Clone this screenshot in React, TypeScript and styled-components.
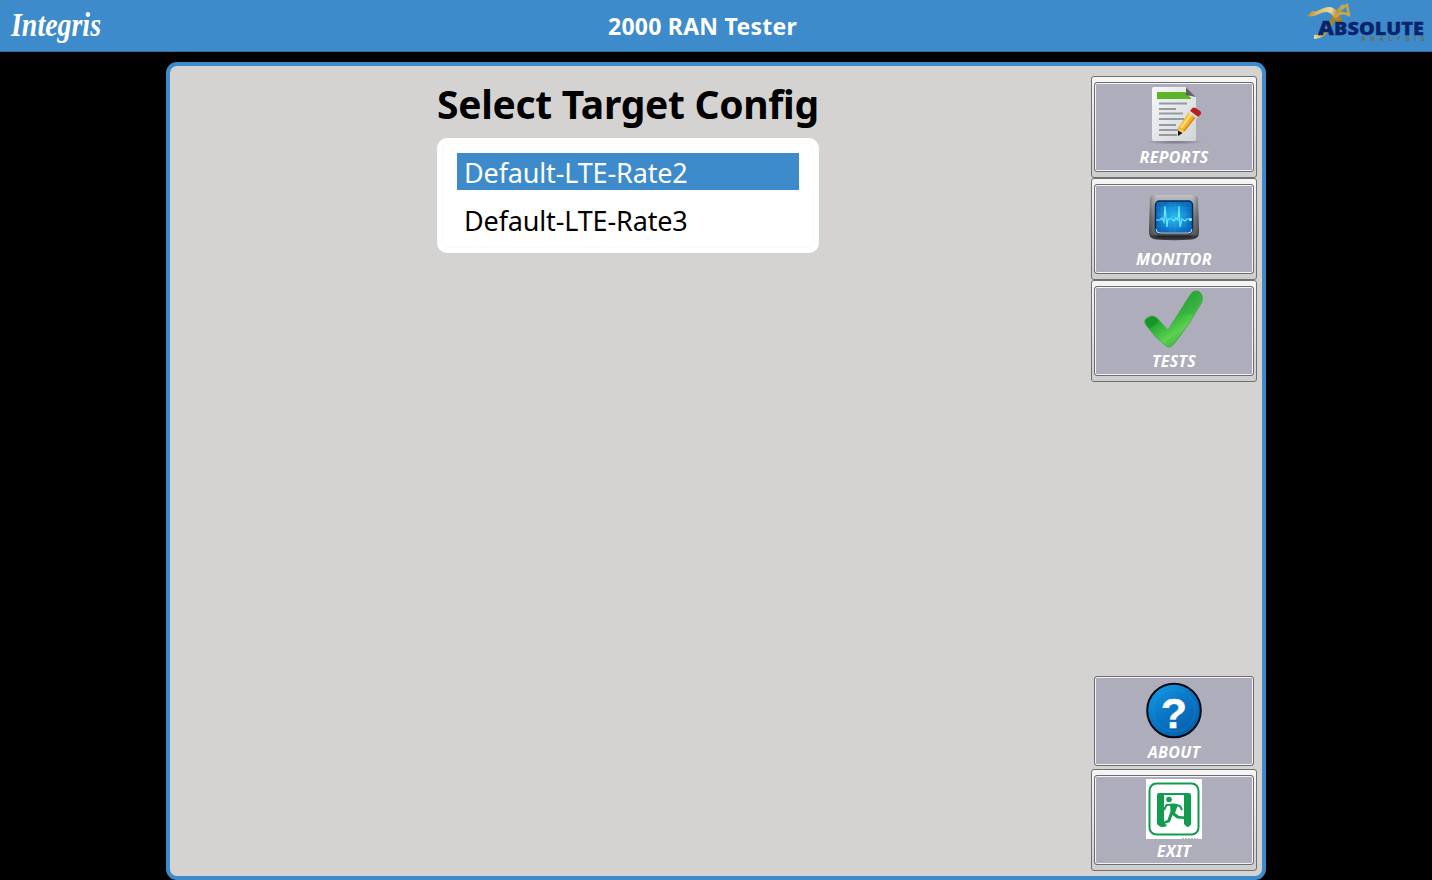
import React from 'react';
import styled, { createGlobalStyle } from 'styled-components';

const Global = createGlobalStyle`
  * { box-sizing: border-box; }
  html, body { margin: 0; height: 100%; background: #000; overflow: hidden; }
  body { font-family: "Noto Sans", "Open Sans", sans-serif; }
`;

const Screen = styled.div`
  width: 1432px;
  height: 880px;
  display: flex;
  flex-direction: column;
  background: #000;
`;

const Header = styled.header`
  height: 52px;
  flex: none;
  display: grid;
  grid-template-columns: 1fr auto 1fr;
  background: #3d8bcb;
  border-bottom: 1px solid #306d9f;
`;

const Title = styled.h1`
  margin: 0;
  padding: 1px 27px 0 0;
  font-size: 23px;
  line-height: 51px;
  font-weight: 700;
  letter-spacing: 0.25px;
  color: #fff;
`;

const BrandLeft = styled.div`
  padding-left: 8px;
  svg { display: block; overflow: visible; }
`;

const BrandRight = styled.div`
  display: flex;
  justify-content: flex-end;
  padding-right: 4px;
`;

const Panel = styled.main`
  width: 1100px;
  height: 818px;
  margin: 10px auto 0;
  border: 4px solid #3d8bcb;
  border-radius: 11px;
  background: #d4d3d1;
  display: flex;
  justify-content: space-between;
`;

const Content = styled.section`
  width: 382px;
  margin-left: 267px;
  padding-top: 11px;
`;

const Heading = styled.h2`
  margin: 0;
  height: 61px;
  line-height: 54px;
  font-size: 39px;
  font-weight: 700;
  letter-spacing: -0.3px;
  white-space: nowrap;
  color: #000;
`;

const ConfigList = styled.ul`
  list-style: none;
  margin: 0;
  height: 115px;
  padding: 10px 15px;
  border: 5px solid #fff;
  border-radius: 10px;
  background: #fff;
  box-shadow: inset 0 0 0 1px #fafafa;
  display: flex;
  flex-direction: column;
  gap: 11px;
`;

const ConfigItem = styled.li<{ $selected?: boolean }>`
  height: 37px;
  flex: none;
  padding: 1px 7px 0;
  line-height: 37px;
  font-size: 27px;
  letter-spacing: -0.15px;
  white-space: nowrap;
  color: ${(p) => (p.$selected ? '#fff' : '#000')};
  background: ${(p) => (p.$selected ? '#3d8bcb' : 'transparent')};
`;

const Sidebar = styled.nav`
  width: 166px;
  margin: 10px 5px 5px 0;
  display: flex;
  flex-direction: column;
`;

const Spacer = styled.div`
  flex: 1;
`;

const Frame = styled.div<{ $bare?: boolean }>`
  height: ${(p) => (p.$bare ? '90px' : '102px')};
  margin-bottom: ${(p) => (p.$bare ? '3px' : '0')};
  padding: ${(p) => (p.$bare ? '0 3px' : '5px 2px')};
  border: ${(p) => (p.$bare ? '0' : '1px solid #707070')};
  border-radius: 3px;
  background: ${(p) => (p.$bare ? 'none' : 'linear-gradient(#f5f5f5, #e6e6e6 45%, #cdcdcd)')};
`;

const Button = styled.button`
  width: 160px;
  height: 90px;
  display: flex;
  flex-direction: column;
  align-items: center;
  padding: 3px 0 0;
  border: 1px solid #6b6b70;
  border-radius: 3px;
  background: #adadbb;
  box-shadow: inset 0 0 0 1px #f4f4f6;
  font-family: inherit;
  svg { display: block; flex: none; }
`;

const Label = styled.span<{ $low?: boolean }>`
  height: 20px;
  line-height: 20px;
  margin-top: ${(p) => (p.$low ? '2px' : '1px')};
  font-size: 16px;
  font-weight: 700;
  font-style: italic;
  letter-spacing: 0.3px;
  color: #fff;
`;

const IntegrisLogo = () => (
  <svg width="104" height="51" viewBox="0 0 104 51">
    <text
      x="3" y="36" textLength="90" lengthAdjust="spacingAndGlyphs"
      fontFamily="'Liberation Serif', serif" fontStyle="italic" fontWeight="700" fontSize="33" fill="#fff"
    >Integris</text>
  </svg>
);

const AbsoluteLogo = () => (
  <svg width="124" height="50" viewBox="0 0 124 50">
    <defs>
      <linearGradient id="goldBand" gradientUnits="userSpaceOnUse" x1="3" y1="12" x2="38" y2="24">
        <stop offset="0" stopColor="#ad822c" />
        <stop offset="0.3" stopColor="#dcc070" />
        <stop offset="0.6" stopColor="#ead9a0" />
        <stop offset="0.8" stopColor="#b78a27" />
        <stop offset="1" stopColor="#a57a20" />
      </linearGradient>
      <linearGradient id="goldTail" gradientUnits="userSpaceOnUse" x1="44" y1="5" x2="12" y2="39">
        <stop offset="0" stopColor="#d9bd68" />
        <stop offset="0.4" stopColor="#a87c1e" />
        <stop offset="0.8" stopColor="#c09a3c" />
        <stop offset="1" stopColor="#f0dfa8" />
      </linearGradient>
    </defs>
    <path d="M40 6 C31 12 29 20 25 27 C21 34 17 37 10 37" fill="none" stroke="url(#goldTail)" strokeWidth="4" />
    <path d="M3 16 L8 11 C14 13 17 7 25 7 C32 7 34 14 39 21 L34 24 C30 18 28 12 22 12 C15 12 12 18 3 16Z" fill="url(#goldBand)" />
    <path d="M39 7 L43 5 C43 9 45 12 45 15 C40 12 35 13 31 17" fill="none" stroke="#c7a548" strokeWidth="2.600" />
    <text
      x="14" y="35" textLength="106" lengthAdjust="spacingAndGlyphs"
      fontFamily="'Open Sans', sans-serif" fontWeight="800" fontSize="18" fill="#0a246c" stroke="#0a246c" strokeWidth="0.3"
    ><tspan fontSize="20">A</tspan>BSOLUTE</text>
    <text
      x="57" y="41" textLength="64" lengthAdjust="spacing"
      fontFamily="'Liberation Sans', sans-serif" fontWeight="700" fontSize="6.500" fill="#6d6e48"
    >ANALYSIS</text>
  </svg>
);

const ReportsIcon = () => (
  <svg width="60" height="60" viewBox="0 0 60 60">
    <defs>
      <linearGradient id="paper" x1="0" y1="0" x2="1" y2="1">
        <stop offset="0" stopColor="#f7f8f8" /><stop offset="1" stopColor="#d2d5d7" />
      </linearGradient>
      <linearGradient id="fold" x1="0" y1="1" x2="1" y2="0">
        <stop offset="0" stopColor="#45454a" /><stop offset="1" stopColor="#97979c" />
      </linearGradient>
      <radialGradient id="shade"><stop offset="0" stopColor="#777783" /><stop offset="1" stopColor="#adadbb" /></radialGradient>
    </defs>
    <ellipse cx="31" cy="56" rx="29" ry="2.5" fill="url(#shade)" />
    <path d="M10 1 H42 L52 11 V53 Q52 55 50 55 H10 Q8 55 8 53 V3 Q8 1 10 1Z" fill="url(#paper)" />
    <path d="M13 6 H41 L47 12 V13 H13Z" fill="#5bb527" />
    <path d="M42 1 L52 11 L42 9Z" fill="url(#fold)" />
    <path d="M15 17.5H43 M15 23H32 M15 27.5H39 M15 33H40 M15 39H32 M15 44H36 M15 49H33" stroke="#929ba3" strokeWidth="2" />
    <path d="M34 42 L45 26 L52 31 L41 45 L34 48Z" fill="#f6b42b" />
    <path d="M37 42 L47 28" stroke="#ffdb72" strokeWidth="2.5" />
    <path d="M40 45 L51 31" stroke="#d98a1d" strokeWidth="1.5" />
    <path d="M34 43 L41 46 L35 50Z" fill="#f2d09b" />
    <path d="M34 44.5 L38.5 47 L34 50Z" fill="#17130f" />
    <path d="M46 25 L48 22.5 Q49.5 21 51.5 22 L56 25 Q58 26.500 56.500 28.500 L54 31Z" fill="#b6201f" />
    <path d="M44.700 26.700 L46 25 L54 31 L52.700 32.500Z" fill="#e1dfdb" />
  </svg>
);

const MonitorIcon = () => (
  <svg width="60" height="60" viewBox="0 0 60 60">
    <defs>
      <linearGradient id="metal" x1="0" y1="0" x2="0" y2="1">
        <stop offset="0" stopColor="#c2c2c3" /><stop offset="0.5" stopColor="#77797b" /><stop offset="0.86" stopColor="#55575a" /><stop offset="0.92" stopColor="#202225" /><stop offset="1" stopColor="#45474a" />
      </linearGradient>
      <linearGradient id="metalSides">
        <stop offset="0" stopColor="#303236" stopOpacity=".5" /><stop offset=".18" stopColor="#aaa" stopOpacity="0" /><stop offset=".82" stopColor="#aaa" stopOpacity="0" /><stop offset="1" stopColor="#303236" stopOpacity=".5" />
      </linearGradient>
      <radialGradient id="scope">
        <stop offset="0" stopColor="#27bdf0" /><stop offset="0.6" stopColor="#1690dc" /><stop offset="1" stopColor="#0d6aba" />
      </radialGradient>
    </defs>
    <path d="M11 7 H49 Q54 7 54 11 L55 44 Q55 51 48 51.500 Q30 53 12 51.500 Q5 51 5 44 L6 11 Q6 7 11 7Z" fill="url(#metal)" />
    <path d="M11 7 H49 Q54 7 54 11 L55 44 Q55 51 48 51.500 Q30 53 12 51.500 Q5 51 5 44 L6 11 Q6 7 11 7Z" fill="url(#metalSides)" />
    <rect x="11.500" y="13" width="37" height="32" rx="4" fill="url(#scope)" stroke="#082b55" strokeWidth="1.500" />
    <path d="M12 41 Q12 45 16 45 H44 Q48 45 48 41" fill="none" stroke="#c3e7f3" strokeWidth="1" />
    <path d="M12 20H48 M12 26H48 M12 38H48 M18 14V44 M26 14V44 M31 14V44 M41 14V44" stroke="#3cb4e3" strokeOpacity=".3" strokeWidth=".7" />
    <path d="M12 32 H16 L18 30 L20 34 L21 18 L23 39 L24 31 H28 L30 33 L32 30 L34 32 L35 18 L36 39 L38 31 L41 33 L43 31 H47" fill="none" stroke="#6ae8ff" strokeWidth="1.200" />
    <circle cx="46.500" cy="31.500" r="1.500" fill="#a9f6ff" />
  </svg>
);

const TestsIcon = () => (
  <svg width="60" height="60" viewBox="0 0 60 60">
    <defs>
      <linearGradient id="tick" x1="0" y1="0" x2="0.7" y2="1">
        <stop offset="0" stopColor="#22982e" /><stop offset="0.45" stopColor="#1ba72d" /><stop offset="0.75" stopColor="#5cd151" /><stop offset="1" stopColor="#34a738" />
      </linearGradient>
    </defs>
    <path d="M2 35 Q-1 30 3 28 Q8 24 13 28 L24 40 L46 5 Q49 0 54 1 Q60 4 58 12 Q45 36 30 54 Q26 59 22 56 Q10 47 2 35Z" fill="url(#tick)" stroke="#4e9f58" strokeWidth=".7" />
    <path d="M2 34 Q0 30 5 28 Q9 25 12 28 L15 31 Q10 37 5 38Z" fill="#168a28" fillOpacity=".6" />
    <path d="M46 6 Q50 1 54 2 Q59 5 56 13 L49 25 Q41 23 35 25Z" fill="#38ad42" fillOpacity=".55" />
  </svg>
);

const AboutIcon = () => (
  <svg width="60" height="60" viewBox="0 0 60 60">
    <defs>
      <linearGradient id="help" x1="0" y1="0" x2=".7" y2="1"><stop offset="0" stopColor="#14a0e8" /><stop offset=".5" stopColor="#0a78c7" /><stop offset="1" stopColor="#0560ae" /></linearGradient>
    </defs>
    <circle cx="30" cy="30.500" r="26.800" fill="url(#help)" stroke="#050a13" strokeWidth="2" />
    <circle cx="30" cy="30.500" r="21" fill="none" stroke="#21a3e9" strokeOpacity=".3" strokeWidth="1" />
    <text x="29.800" y="48" textAnchor="middle" fontFamily="'Liberation Sans', sans-serif" fontWeight="700" fontSize="43" fill="#fff" stroke="#fff" strokeWidth=".4">?</text>
  </svg>
);

const ExitIcon = () => (
  <svg width="60" height="60" viewBox="0 0 60 60">
    <rect x="2" y="0" width="56" height="60" fill="#fff" />
    <rect x="5.500" y="4.500" width="49" height="51" rx="7" fill="#fff" stroke="#129a50" strokeWidth="2" />
    <path d="M13 16 Q13 14 15 14 H45 Q47 14 47 16 V45 Q46 48 43 48 L40 45 V16 H20 V43 L23 47 Q18 49 15 47 L13 45Z" fill="#119c50" />
    <circle cx="25" cy="20.500" r="2.800" fill="#119c50" />
    <path d="M20 31 L22.500 26 L30 25.500 L36 27 L38 31" fill="none" stroke="#119c50" strokeWidth="2" strokeLinejoin="round" />
    <path d="M26 25 L34 25.500 L31 34 L35 37 L41 37.500 V40 L33 39.500 L28.500 36 L26 43 L20 45 V42.500 L23.500 41 L26.500 32Z" fill="#119c50" />
    <path d="M38 59.500 H54" stroke="#aaa" strokeDasharray="2 1" strokeWidth=".8" />
  </svg>
);

type NavButtonProps = { label: string; bare?: boolean; low?: boolean; children: React.ReactNode };

const NavButton = ({ label, bare, low, children }: NavButtonProps) => (
  <Frame $bare={bare}>
    <Button type="button">
      {children}
      <Label $low={low}>{label}</Label>
    </Button>
  </Frame>
);

export default function App() {
  return (
    <Screen>
      <Global />
      <Header>
        <BrandLeft><IntegrisLogo /></BrandLeft>
        <Title>2000 RAN Tester</Title>
        <BrandRight><AbsoluteLogo /></BrandRight>
      </Header>
      <Panel>
        <Content>
          <Heading>Select Target Config</Heading>
          <ConfigList>
            <ConfigItem $selected>Default-LTE-Rate2</ConfigItem>
            <ConfigItem>Default-LTE-Rate3</ConfigItem>
          </ConfigList>
        </Content>
        <Sidebar>
          <NavButton label="REPORTS"><ReportsIcon /></NavButton>
          <NavButton label="MONITOR"><MonitorIcon /></NavButton>
          <NavButton label="TESTS"><TestsIcon /></NavButton>
          <Spacer />
          <NavButton label="ABOUT" bare low><AboutIcon /></NavButton>
          <NavButton label="EXIT" low><ExitIcon /></NavButton>
        </Sidebar>
      </Panel>
    </Screen>
  );
}
